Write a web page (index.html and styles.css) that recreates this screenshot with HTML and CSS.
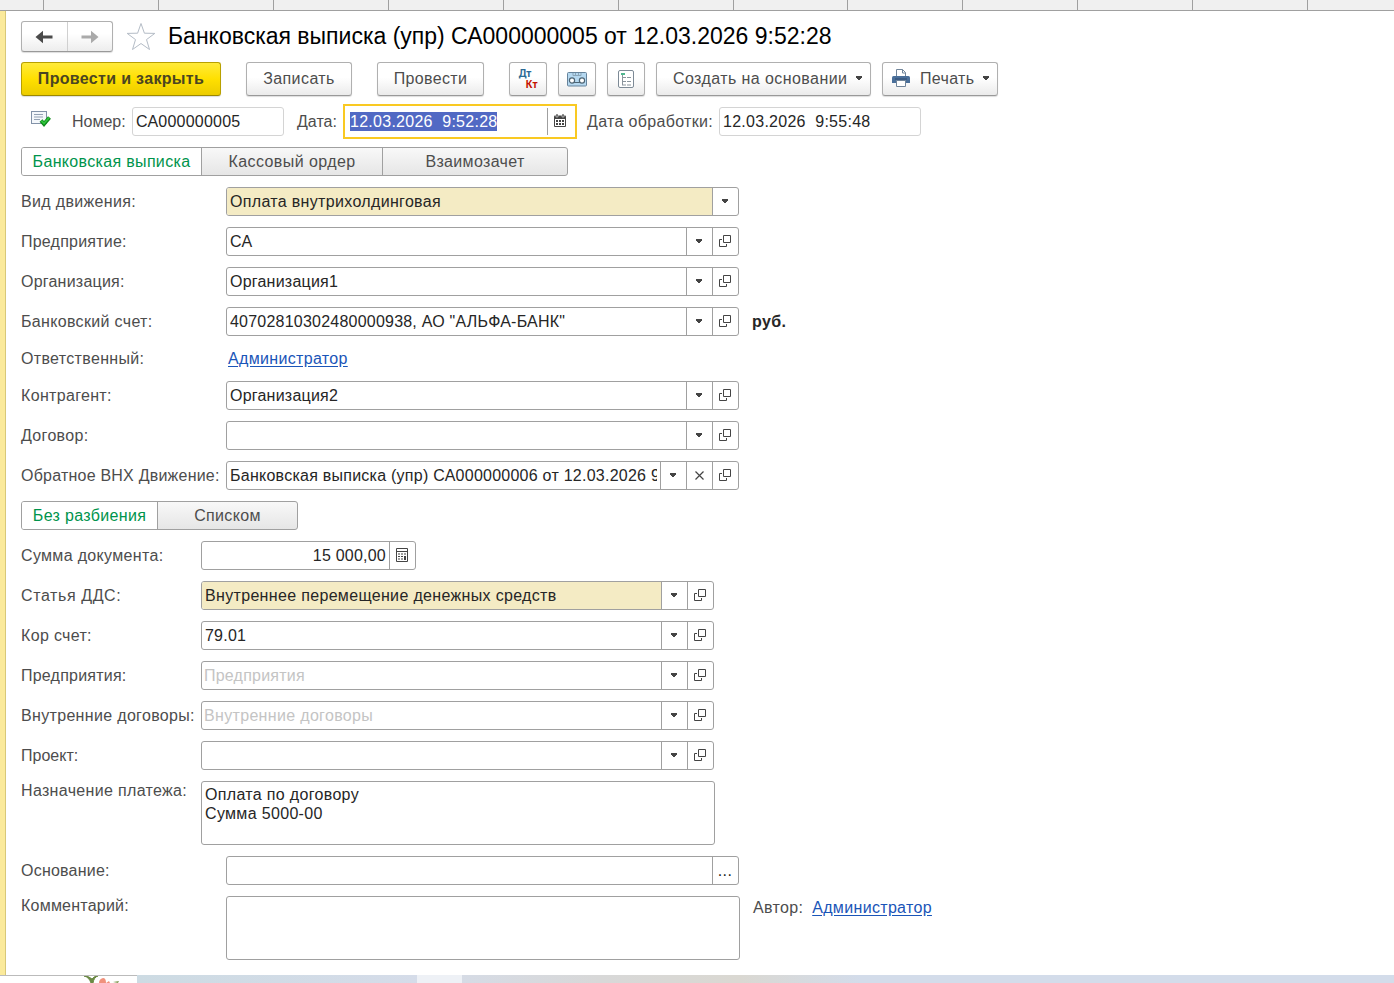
FILE: index.html
```
<!DOCTYPE html>
<html lang="ru">
<head>
<meta charset="utf-8">
<title>Банковская выписка</title>
<link rel="stylesheet" href="styles.css">
</head>
<body>
<svg width="0" height="0" class="defs">
  <symbol id="i-down" viewBox="0 0 6 4"><path d="M0 0h6v2H5v1H4v1H2V3H1V2H0z" fill="#444"/></symbol>
  <symbol id="i-open" viewBox="0 0 12 12"><path d="M4.500.5h7v7h-7zM3 4.500H.5v7h7V9" fill="none" stroke="#444"/></symbol>
</svg>
<div class="ruler"><i class="first"></i><i></i><i></i><i></i><i></i><i></i><i></i><i class="short"></i><i></i><i></i><i></i><i></i></div>
<main class="form">
  <header class="head">
    <div class="nav">
      <span><svg width="18" height="14" viewBox="0 0 18 14"><path d="M.5 7l7.500-6.200v4.700h9.500v3H8v4.700z" fill="#4a4a4a"/></svg></span>
      <span><svg width="18" height="14" viewBox="0 0 18 14"><path d="M17.500 7L10 .8v4.700H.5v3H10v4.700z" fill="#aaa"/></svg></span>
    </div>
    <svg class="star" width="30" height="29" viewBox="0 0 30 29"><path d="M15 1.500l3.400 9.700 10.400.2-8.300 6.200 3 9.900-8.500-6-8.500 6 3-9.900L1.200 11.400l10.400-.2z" fill="#fff" stroke="#b4bcc6"/></svg>
    <h1>Банковская выписка (упр) СА000000005 от 12.03.2026 9:52:28</h1>
  </header>
  <div class="toolbar">
    <button class="btn main">Провести и закрыть</button>
    <button class="btn save s4">Записать</button>
    <button class="btn post">Провести</button>
    <button class="btn sq dtkt"><span class="dt">Дт</span><span class="kt">Кт</span></button>
    <button class="btn sq"><svg width="20" height="15" viewBox="0 0 20 15"><rect x=".5" y=".5" width="19" height="13.500" rx="1" fill="#b5d8f0" stroke="#66839b"/><path d="M6 1v2.500h8V1M8.500 1v2M11.500 1v2" fill="none" stroke="#8aa5b8"/><path d="M5 10.500h10" stroke="#4f6676"/><circle cx="5" cy="8.500" r="2.600" fill="#fff" stroke="#4f6676" stroke-width="1.200"/><circle cx="15" cy="8.500" r="2.600" fill="#fff" stroke="#4f6676" stroke-width="1.200"/></svg></button>
    <button class="btn sq"><svg width="16" height="18" viewBox="0 0 16 18"><rect x=".5" y=".5" width="15" height="17" rx="1.500" fill="#fff" stroke="#7d8a96"/><path d="M3 3h4v2H3z" fill="#4fb78f"/><path d="M4.500 5v10.500M5 7.500h3M5 11.500h3M5 15h3M9 7.500h4M9 11.500h4M9 15h4" stroke="#8a949c" fill="none"/></svg></button>
    <button class="btn create s4"><span>Создать на основании</span><svg width="6" height="4"><use href="#i-down"/></svg></button>
    <button class="btn print"><svg width="18" height="18" viewBox="0 0 18 18"><path d="M4.500 8V.5h6l3 3V8" fill="#fff" stroke="#71859a"/><path d="M10.500.5v3.500h3" fill="none" stroke="#71859a"/><path d="M1.500 7h15Q18 7 18 8.500V14H0V8.500Q0 7 1.500 7z" fill="#4a6f9a"/><path d="M3 10h12" stroke="#2f4b6e"/><path d="M4.500 11.500h9v6h-9z" fill="#fff" stroke="#71859a"/></svg><span>Печать</span><svg width="6" height="4"><use href="#i-down"/></svg></button>
  </div>
  <div class="row idrow">
    <svg class="posted" width="20" height="16" viewBox="0 0 20 16"><rect x=".5" y=".5" width="15" height="12" fill="#f4f7fb" stroke="#8292a8"/><path d="M3 3.500h9M3 6h9M3 8.500h6" stroke="#93a1b3"/><path d="M10 9.500l3 3.500 5.500-6.500" fill="none" stroke="#0f8a1c" stroke-width="3.800"/><path d="M10.300 9.600l2.700 2.900 5.200-6" fill="none" stroke="#2fc53b" stroke-width="1.800"/></svg>
    <label class="l-num s0">Номер:</label><div class="ro num s2">СА000000005</div>
    <label class="l-date s0">Дата:</label>
    <div class="active"><span class="sel">12.03.2026&nbsp; 9:52:28</span><span class="cal"><svg width="12" height="13" viewBox="0 0 12 13"><path d="M1 1.500h10q1 0 1 1V12q0 1-1 1H1q-1 0-1-1V2.500q0-1 1-1z" fill="#444"/><path d="M2 0h2v3H2zM8 0h2v3H8z" fill="#444" stroke="#fff" stroke-width=".5"/><path d="M1 5h10v7H1z" fill="#fff"/><path d="M2 6h2v2H2zM5 6h2v2H5zM8 6h2v2H8zM2 9h2v2H2zM5 9h2v2H5zM8 9h2v2H8z" fill="#444"/></svg></span></div>
    <label class="l-proc">Дата обработки:</label><div class="ro proc">12.03.2026&nbsp; 9:55:48</div>
  </div>
  <div class="tabs kinds"><span class="on">Банковская выписка</span><span class="s4">Кассовый ордер</span><span>Взаимозачет</span></div>

  <div class="row"><label>Вид движения:</label><div class="field req"><span class="val">Оплата внутрихолдинговая</span><b class="dd"></b></div></div>
  <div class="row"><label class="s2">Предприятие:</label><div class="field"><span class="val s4">СА</span><b class="dd"></b><b class="op"></b></div></div>
  <div class="row"><label class="s2">Организация:</label><div class="field"><span class="val s2">Организация1</span><b class="dd"></b><b class="op"></b></div></div>
  <div class="row"><label>Банковский счет:</label><div class="field"><span class="val s2">40702810302480000938, АО "АЛЬФА-БАНК"</span><b class="dd"></b><b class="op"></b></div><strong class="cur s4">руб.</strong></div>
  <div class="row link"><label>Ответственный:</label><a>Администратор</a></div>
  <div class="row"><label>Контрагент:</label><div class="field"><span class="val s2">Организация2</span><b class="dd"></b><b class="op"></b></div></div>
  <div class="row"><label>Договор:</label><div class="field"><span class="val"></span><b class="dd"></b><b class="op"></b></div></div>
  <div class="row"><label class="s2">Обратное ВНХ Движение:</label><div class="field"><span class="val s2 long">Банковская выписка (упр) СА000000006 от 12.03.2026 9</span><b class="dd"></b><b class="cl"></b><b class="op"></b></div></div>

  <div class="tabs split"><span class="on">Без разбиения</span><span>Списком</span></div>

  <div class="row near"><label>Сумма документа:</label><div class="field sum"><span class="val s2">15 000,00</span><b class="calc"></b></div></div>
  <div class="row near"><label class="s6">Статья ДДС:</label><div class="field req"><span class="val">Внутреннее перемещение денежных средств</span><b class="dd"></b><b class="op"></b></div></div>
  <div class="row near"><label>Кор счет:</label><div class="field"><span class="val s2">79.01</span><b class="dd"></b><b class="op"></b></div></div>
  <div class="row near"><label class="s2">Предприятия:</label><div class="field"><span class="val ph s2">Предприятия</span><b class="dd"></b><b class="op"></b></div></div>
  <div class="row near"><label>Внутренние договоры:</label><div class="field"><span class="val ph">Внутренние договоры</span><b class="dd"></b><b class="op"></b></div></div>
  <div class="row near"><label class="s0">Проект:</label><div class="field"><span class="val"></span><b class="dd"></b><b class="op"></b></div></div>
  <div class="row near top"><label>Назначение платежа:</label><div class="area">Оплата по договору<br>Сумма 5000-00</div></div>
  <div class="row"><label class="s2">Основание:</label><div class="field"><span class="val"></span><b class="more">...</b></div></div>
  <div class="row top"><label class="s2">Комментарий:</label><div class="area"></div><div class="author"><span>Автор:</span><a>Администратор</a></div></div>
</main>
<footer class="desk"><div class="thumb"><svg width="40" height="7" viewBox="0 0 40 7"><path d="M0 0q5 1 7 7h2q1-6 5-7-4 0-6 3Q5 0 0 0z" fill="#6b8a45" stroke="#6b8a45"/><path d="M15 7q0-4 4-5 3 0 3 5zM22 7l3-2 1 2z" fill="#f0917c"/><path d="M29 6l6-1-1 2z" fill="#7f9a55"/></svg></div><div class="lite"></div></footer>
<script src="icons.js"></script>
</body>
</html>
```
FILE: icons.js
```
// Fills the field buttons with their glyphs.
const glyphs = {
  dd: '<svg width="6" height="4"><use href="#i-down"/></svg>',
  op: '<svg width="12" height="12"><use href="#i-open"/></svg>',
  cl: '<svg width="9" height="9" viewBox="0 0 9 9"><path d="M.5.5l8 8M8.500.5l-8 8" stroke="#444" stroke-width="1.200"/></svg>',
  calc: '<svg width="12" height="14" viewBox="0 0 12 14"><path d="M.5.5h11v13H.5zM0 3.500h12" fill="none" stroke="#444"/><path d="M2 5.500h2v1H2zM5 5.500h2v1H5zM8 5.500h2v1H8zM2 8h2v1H2zM5 8h2v1H5zM8 8h2v4H8zM2 10.500h2v1H2zM5 10.500h2v1H5z" fill="#444"/></svg>'
};
for (const k in glyphs) document.querySelectorAll('b.' + k).forEach(e => { e.innerHTML = glyphs[k]; });
```
FILE: styles.css
```
* { box-sizing: border-box; }
body { margin: 0; height: 983px; overflow: hidden; background: #fff; font: 16px/19px "Liberation Sans", Arial, sans-serif; letter-spacing: .33px; color: #4d4d4d; display: flex; flex-direction: column; }
.defs { position: absolute; }
.ruler { height: 11px; flex: none; background: #f0f0f0; border-bottom: 1px solid #a0a0a0; display: flex; }
.ruler i { width: 115px; border-right: 1px solid #a0a0a0; flex: none; }
.ruler .first { width: 44px; }
.ruler .short { width: 114px; }
.form { height: 964px; flex: none; padding: 10px 0 0 16px; border-left: 5px solid #fbea9b; display: flex; flex-direction: column; gap: 11px; box-shadow: inset 1px 0 #d8c878; }
.head { height: 31px; margin-bottom: -1px; display: flex; align-items: center; }
.nav { width: 92px; height: 31px; border: 1px solid #b0b0b0; border-bottom-color: #999; border-radius: 3px; display: flex; background: linear-gradient(#fff 40%, #ededed); box-shadow: 0 1px 1px #ddd; }
.nav span { flex: 1; display: flex; align-items: center; justify-content: center; }
.nav span + span { border-left: 1px solid #d0d0d0; }
.star { margin-left: 13px; }
h1 { margin: 0 0 2px 12px; font-size: 23px; line-height: 28px; font-weight: normal; letter-spacing: 0; color: #000; white-space: nowrap; }
.toolbar { display: flex; height: 34px; gap: 11px; }
.btn { font: inherit; letter-spacing: .33px; color: #4d4d4d; padding: 0 0 2px; margin: 0; height: 34px; border: 1px solid #b0b0b0; border-bottom-color: #999; border-radius: 3px; background: linear-gradient(#fff 45%, #ebebeb); box-shadow: 0 1px 1px #ddd; display: flex; align-items: center; justify-content: center; white-space: nowrap; }
.main { width: 200px; margin-right: 14px; font-weight: bold; color: #4a4522; border-color: #b8a000 #b8a000 #9c8800; background: linear-gradient(#ffea3a, #ffe000 50%, #eccc00); }
.save { width: 106px; margin-right: 14px; }
.post { width: 107px; margin-right: 14px; }
.sq { width: 38px; padding: 0; }
.dtkt { flex-direction: column; font: bold 10px/11px "Noto Sans", sans-serif; letter-spacing: 0; }
.dt { color: #2a6a96; margin-right: 6px; }
.kt { color: #c41200; margin-left: 7px; }
.create { width: 215px; gap: 9px; justify-content: flex-start; padding-left: 16px; }
.print { width: 116px; gap: 9px; justify-content: flex-start; padding-left: 9px; }
.print span { margin-left: 1px; }
.s0 { letter-spacing: 0; }
.s2 { letter-spacing: .22px; }
.s4 { letter-spacing: .42px; }
.s6 { letter-spacing: .6px; }
.row { display: flex; height: 29px; line-height: 29px; white-space: nowrap; }
.row > label { width: 205px; flex: none; }
.near > label { width: 180px; }
.link { height: 23px; line-height: 23px; }
.link a { margin-left: 2px; }
a { color: #1a55b8; text-decoration: underline; text-underline-offset: 2px; }
.row.top { height: 64px; line-height: 19px; }
.field { width: 513px; border: 1px solid #a0a0a0; border-radius: 3px; display: flex; line-height: 27px; overflow: hidden; color: #262626; background: #fff; }
.val { flex: 1; min-width: 0; padding-left: 3px; margin-right: 3px; overflow: hidden; }
.long { letter-spacing: .25px; }
.field b { width: 26px; flex: none; border-left: 1px solid #a0a0a0; padding: 0 1px 1px 0; display: flex; align-items: center; justify-content: center; font-weight: normal; }
.req .val { background: #f4ebc4; margin-right: 0; }
.ph { color: #c4c4c4; padding-left: 2px; }
.sum { width: 215px; }
.sum .val { text-align: right; }
.area { width: 514px; height: 64px; border: 1px solid #a0a0a0; border-radius: 3px; padding: 3px; color: #262626; }
.cur { margin-left: 13px; color: #262626; }
.author { margin: 2px 0 0 13px; display: flex; gap: 9px; }
.tabs { height: 29px; display: flex; border: 1px solid #a0a0a0; border-radius: 3px; line-height: 27px; overflow: hidden; background: linear-gradient(#f8f8f8, #e6e6e6); }
.tabs > span { flex: 1; text-align: center; }
.tabs > span + span { border-left: 1px solid #a0a0a0; }
.tabs > .on { background: #fff; color: #00944c; flex: none; }
.kinds { width: 547px; }
.kinds .on { width: 179px; }
.kinds > span:nth-child(2) { width: 181px; flex: none; }
.split { width: 277px; }
.split .on { width: 135px; }
.posted { margin: 4px 0 0 10px; }
.row .l-num { margin-left: 21px; width: 60px; }
.row .l-date { width: 46px; margin-left: 13px; }
.row .l-proc { width: 132px; margin-left: 10px; }
.ro { height: 29px; border: 1px solid #d4d4d4; border-radius: 3px; padding-left: 3px; line-height: 27px; color: #262626; }
.num { width: 152px; }
.proc { width: 202px; letter-spacing: .27px; }
.active { width: 234px; height: 35px; margin-top: -3px; border: 2px solid #f9c922; padding-left: 5px; display: flex; align-items: center; }
.sel { background: #5169c4; color: #fff; line-height: 19px; letter-spacing: .27px; }
.cal { margin-left: auto; width: 28px; height: 27px; border-left: 1px solid #a0a0a0; padding: 6px 0 0 6px; line-height: 0; }
.desk { height: 8px; flex: none; display: flex; background: linear-gradient(90deg, #cddbe3 137px, #d5dce9 420px, #d8d8d8 600px, #dad8d2 740px, #d3dcea 860px, #d3dcea); }
.thumb { width: 137px; background: #fff; border-top: 1px solid #bbb; padding-left: 84px; line-height: 0; }
.lite { margin-left: 280px; width: 45px; background: #eef1f6; }
```
